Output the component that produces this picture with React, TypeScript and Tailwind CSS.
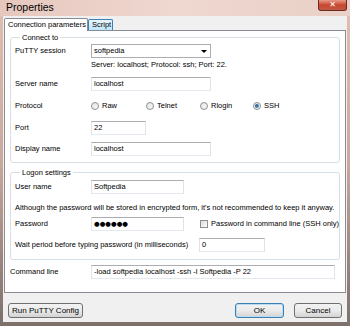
import React from "react"

const Label = ({ children, w = "w-[76px]" }: { children: React.ReactNode; w?: string }) => (
  <div className={`${w} shrink-0`}>{children}</div>
)

const TextBox = ({ value, w, children }: { value?: string; w: string; children?: React.ReactNode }) => (
  <div className={`${w} h-[14px] border border-[#abadb3] border-b-[#e3e9ef] border-x-[#e2e3ea] bg-white flex items-center pl-[2px]`}>
    {value}
    {children}
  </div>
)

const Radio = ({ label, checked, w }: { label: string; checked?: boolean; w: string }) => (
  <div className={`${w} flex items-center`}>
    <div className="w-[8px] h-[8px] rounded-full border border-[#8e8f8f] bg-gradient-to-br from-[#e6e6e6] to-[#f8f8f8] flex items-center justify-center">
      {checked && <div className="w-[4px] h-[4px] rounded-full bg-gradient-to-br from-[#1c4e7e] to-[#5ba0d8]" />}
    </div>
    <span className="ml-[3px]">{label}</span>
  </div>
)

const Button = ({ children, w, primary }: { children: React.ReactNode; w: string; primary?: boolean }) => (
  <div
    className={`${w} h-[15px] rounded-[3px] border ${primary ? "border-[#3c7fb1] shadow-[inset_0_0_0_1px_#b9dcf3]" : "border-[#707070]"} bg-gradient-to-b from-[#f2f2f2] via-[#ebebeb] to-[#d3d3d3] flex items-center justify-center text-[8px]`}>
    {children}
  </div>
)

function App() {
  return (
    <div className="w-[350px] h-[326px] flex flex-col bg-gradient-to-b from-[#e2bfb3] via-[#c9a89d] to-[#7d706b] font-['Liberation_Sans',sans-serif] text-[7.5px] text-black leading-none">
      {/* title bar */}
      <div className="h-[16px] flex items-start justify-between bg-gradient-to-r from-[#e6c7bd] via-[#efd8d0] to-[#ead0c7]">
        <div className="pl-[6px] pt-[2px] text-[10.5px]">Properties</div>
        <div className="mr-[3px] w-[29px] h-[11px] rounded-b-[3px] border border-t-0 border-[#6b2a22] bg-gradient-to-b from-[#e39a88] via-[#c9452f] to-[#c05a44] flex items-center justify-center text-white text-[8px] font-bold font-['DejaVu_Sans',sans-serif]">
          ✕
        </div>
      </div>

      {/* client */}
      <div className="flex-1 mx-[3px] mb-[4px] bg-[#f0f0f0] flex flex-col">
        {/* tabs */}
        <div className="h-[14px] flex items-end pl-[1px] pt-[1px]">
          <div className="w-[84px] h-[13px] -mb-px relative z-10 bg-white border border-b-0 border-[#898c95] rounded-t-[2px] flex items-center pl-[3px] text-[7.5px]">
            Connection parameters
          </div>
          <div className="w-[25px] h-[11px] border border-b-0 border-[#3c7fb1] rounded-t-[2px] bg-gradient-to-b from-[#eaf6fd] to-[#bee6fd] flex items-center pl-[3px]">
            Script
          </div>
        </div>

        {/* panel */}
        <div className="h-[263px] mx-[1px] bg-white border border-[#898c95] px-[5px] pt-[2px] flex flex-col">
          <fieldset className="border border-[#d5dfe5] rounded-[3px] pl-[4px] pb-[6px]">
            <legend className="ml-[5px] px-[2px] leading-[9px]">Connect to</legend>
            <div className="flex items-center mt-[2px]">
              <Label>PuTTY session</Label>
              <div className="w-[120px] h-[14px] border border-[#abadb3] bg-white flex items-center justify-between pl-[2px] pr-[3px]">
                softpedia
                <div className="w-0 h-0 border-l-[3px] border-r-[3px] border-t-[3px] border-l-transparent border-r-transparent border-t-black" />
              </div>
            </div>
            <div className="flex items-center h-[10px] mt-[2px]">
              <Label> </Label>
              <span>Server: localhost; Protocol: ssh; Port: 22.</span>
            </div>
            <div className="flex items-center mt-[7px]">
              <Label>Server name</Label>
              <TextBox w="w-[120px]" value="localhost" />
            </div>
            <div className="flex items-center h-[14px] mt-[8px]">
              <Label>Protocol</Label>
              <Radio w="w-[55px]" label="Raw" />
              <Radio w="w-[54px]" label="Telnet" />
              <Radio w="w-[53px]" label="Rlogin" />
              <Radio w="w-[40px]" label="SSH" checked />
            </div>
            <div className="flex items-center mt-[8px]">
              <Label>Port</Label>
              <TextBox w="w-[55px]" value="22" />
            </div>
            <div className="flex items-center mt-[7px]">
              <Label>Display name</Label>
              <TextBox w="w-[120px]" value="localhost" />
            </div>
          </fieldset>

          <fieldset className="mt-[5px] border border-[#d5dfe5] rounded-[3px] pl-[4px] pb-[7px]">
            <legend className="ml-[5px] px-[2px] leading-[9px]">Logon settings</legend>
            <div className="flex items-center mt-[3px]">
              <Label>User name</Label>
              <TextBox w="w-[93px]" value="Softpedia" />
            </div>
            <div className="flex items-center h-[10px] mt-[9px]">
              Although the password will be stored in encrypted form, it's not recommended to keep it anyway.
            </div>
            <div className="flex items-center mt-[4px]">
              <Label>Password</Label>
              <TextBox w="w-[93px]">
                <span className="font-['DejaVu_Sans',sans-serif] text-[6.5px] tracking-[0px]">●●●●●●</span>
              </TextBox>
              <div className="ml-[16px] w-[8px] h-[8px] border border-[#8e8f8f] bg-gradient-to-br from-[#dcdcdc] to-[#fbfbfb]" />
              <span className="ml-[3px]">Password in command line (SSH only)</span>
            </div>
            <div className="flex items-center mt-[7px]">
              <Label w="w-[184px]">Wait period before typing password (in milliseconds)</Label>
              <TextBox w="w-[66px]" value="0" />
            </div>
          </fieldset>

          <div className="flex items-center mt-[5px]">
            <Label w="w-[81px]">Command line</Label>
            <TextBox w="w-[244px]" value="-load softpedia localhost -ssh -l Softpedia -P 22" />
          </div>
        </div>

        {/* buttons */}
        <div className="flex-1 flex items-start pt-[10px] px-[5px]">
          <Button w="w-[75px]">Run PuTTY Config</Button>
          <div className="flex-1" />
          <Button w="w-[49px]" primary>
            OK
          </Button>
          <div className="w-[10px]" />
          <Button w="w-[48px]">Cancel</Button>
        </div>
      </div>
    </div>
  )
}

export default App
